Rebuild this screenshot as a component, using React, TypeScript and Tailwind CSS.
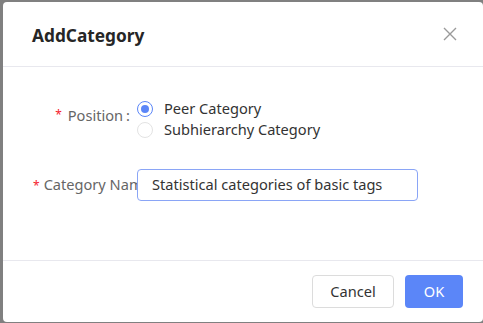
import React from 'react';

export default function App() {
  return (
    <div className="w-[483px] h-[323px] bg-[#808080] pl-[3px] pt-[2px] overflow-hidden" style={{ fontFamily: '"Noto Sans", "Open Sans", sans-serif' }}>
      {/* Dialog */}
      <div className="w-[480px] h-[320px] bg-white rounded-[4px] flex flex-col">
        {/* Header */}
        <div className="h-[65px] flex items-center justify-between pl-[29px] pr-[25px] pt-[3px] border-b border-[#e8e8ee]">
          <div className="text-[17.3px] font-bold text-[#262626]">AddCategory</div>
          <svg width="16" height="16" viewBox="0 0 16 16" className="text-[#9a9a9a] -mt-[3px]">
            <path d="M2 2 L14 14 M14 2 L2 14" stroke="currentColor" strokeWidth="1.4" fill="none" />
          </svg>
        </div>

        {/* Body */}
        <div className="flex-1 pl-[30px] pt-[31px] text-[14.6px]">
          <div className="flex">
            <div className="w-[104px] shrink-0 flex justify-end pr-[7px] pt-[7px] text-[#666]">
              <span className="text-[#f5222d] mr-[6px] text-[12px] leading-[20px]">*</span>
              <span className="leading-[20px]">Position<span className="ml-[3px]">:</span></span>
            </div>
            <div className="flex flex-col">
              <label className="flex items-center h-[21px] text-[#333]">
                <span className="w-[16px] h-[16px] rounded-full border border-[#5b86f8] flex items-center justify-center mr-[11px]">
                  <span className="w-[8px] h-[8px] rounded-full bg-[#5b86f8]" />
                </span>
                Peer Category
              </label>
              <label className="flex items-center h-[21px] text-[#333]">
                <span className="w-[16px] h-[16px] rounded-full border border-[#e3e3e3] mr-[11px]" />
                Subhierarchy Category
              </label>
            </div>
          </div>

          <div className="flex items-center mt-[29px]">
            <div className="w-[104px] shrink-0 overflow-hidden whitespace-nowrap text-[#666]">
              <span className="text-[#f5222d] mr-[4px] text-[12px]">*</span>
              Category Name:
            </div>
            <div className="w-[281px] h-[32px] border border-[#8aa5f6] rounded-[4px] flex items-center pl-[14px] text-[#333]">
              Statistical categories of basic tags
            </div>
          </div>
        </div>

        {/* Footer */}
        <div className="h-[62px] border-t border-[#e8e8ee] flex items-start justify-end gap-[11px] pt-[14px] pr-[20px]">
          <button className="w-[82px] h-[33px] border border-[#dcdcdc] rounded-[4px] bg-white text-[14.6px] text-[#333]">Cancel</button>
          <button className="w-[58px] h-[33px] rounded-[4px] bg-[#5b86f8] text-[14.6px] text-white">OK</button>
        </div>
      </div>
    </div>
  );
}
